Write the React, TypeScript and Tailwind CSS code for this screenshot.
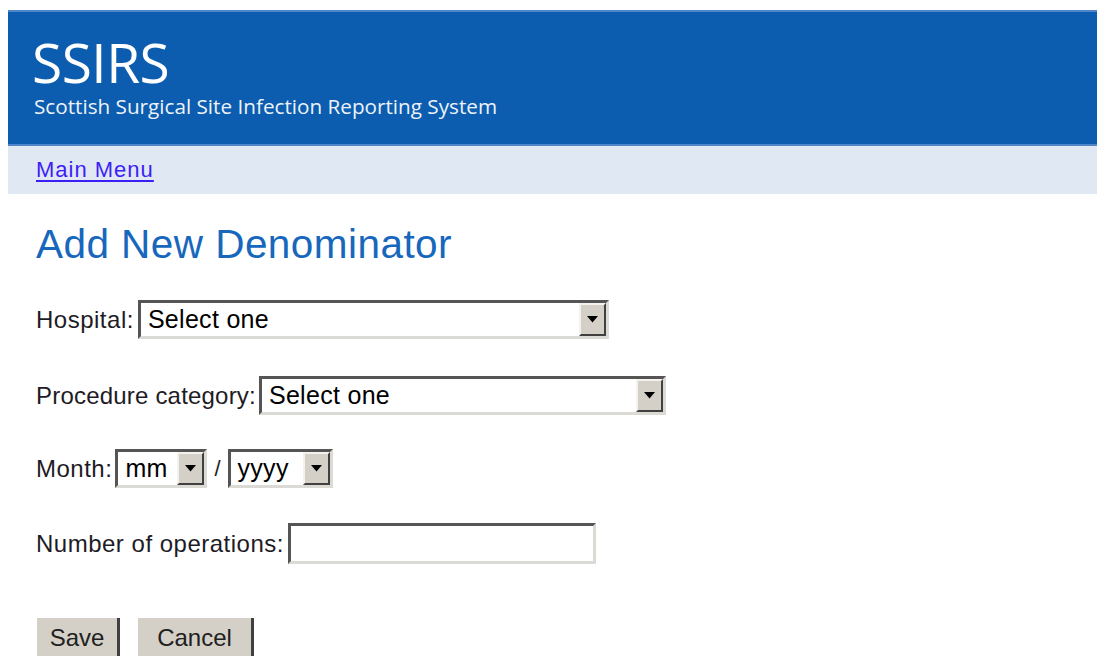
import React from "react";

const arial = { fontFamily: '"Liberation Sans", Arial, sans-serif' };
const humanist = { fontFamily: '"Open Sans", "Noto Sans", sans-serif' };

function DropArrow() {
  return (
    <div className="flex h-full w-[27px] shrink-0 items-center justify-center border-2 border-t-[#f4f2ee] border-l-[#f4f2ee] border-b-[#404040] border-r-[#404040] bg-[#d4d0c8]">
      <svg width="11" height="7" viewBox="0 0 11 7">
        <path d="M0 0 H11 L5.5 6.5 Z" fill="#000" />
      </svg>
    </div>
  );
}

function FakeSelect({ width, text }: { width: string; text: string }) {
  return (
    <div
      className={`flex h-[39px] items-stretch border-[3px] border-t-[#555] border-l-[#555] border-b-[#dcdad5] border-r-[#dcdad5] bg-white ${width}`}
    >
      <div className="flex flex-1 items-center overflow-hidden pl-[7px] text-[25px] leading-none tracking-[0.3px] text-black">
        {text}
      </div>
      <DropArrow />
    </div>
  );
}

function Label({ children, tight }: { children: React.ReactNode; tight?: boolean }) {
  return (
    <span className={`text-[24px] text-[#1e1b26] ${tight ? "tracking-[0.2px]" : "tracking-[0.5px]"}`}>
      {children}
    </span>
  );
}

export default function App() {
  return (
    <div className="min-h-[656px] bg-white pl-[8px] pt-[10px]" style={arial}>
      {/* site banner */}
      <header className="h-[136px] border-t-2 border-b-2 border-t-[#4f86c9] border-b-[#4f86c9] bg-[#0c5daf] pl-[24px] pt-[25px] text-white">
        <div className="text-[55px] leading-[50px] tracking-[-0.5px]" style={humanist}>
          SSIRS
        </div>
        <div className="mt-[7px] pl-[2px] text-[20.7px] leading-[24px] text-[#eef3fa]" style={humanist}>
          Scottish Surgical Site Infection Reporting System
        </div>
      </header>

      {/* navigation strip */}
      <nav className="flex h-[48px] items-center bg-[#dfe8f3] pl-[28px]">
        <a
          href="#"
          className="text-[22px] leading-none tracking-[1px] text-[#3d1ff5] underline decoration-[2px] underline-offset-[3px]"
        >
          Main Menu
        </a>
      </nav>

      <main className="pl-[28px]">
        <h1 className="mt-[28px] text-[40.5px] leading-[44px] tracking-[0.45px] text-[#1767bd]">Add New Denominator</h1>

        <div className="mt-[34px] flex items-center gap-[4px]">
          <Label>Hospital:</Label>
          <FakeSelect width="w-[471px]" text="Select one" />
        </div>

        <div className="mt-[37px] flex items-center gap-[3px]">
          <Label tight>Procedure category:</Label>
          <FakeSelect width="w-[407px]" text="Select one" />
        </div>

        <div className="mt-[34px] flex items-center gap-[3px]">
          <Label>Month:</Label>
          <FakeSelect width="w-[92px]" text="mm" />
          <span className="mx-[4px] text-[22px] text-[#1e1b26]">/</span>
          <FakeSelect width="w-[105px]" text="yyyy" />
        </div>

        <div className="mt-[35px] flex items-center gap-[4px]">
          <Label>Number of operations:</Label>
          <div className="h-[41px] w-[308px] border-[3px] border-t-[#555] border-l-[#555] border-b-[#dcdad5] border-r-[#dcdad5] bg-white" />
        </div>

        <div className="mt-[54px] flex gap-[18px] pl-[1px]">
          <button className="h-[44px] w-[83px] border-r-[3px] border-r-[#404040] bg-[#d4d0c8] pb-[4px] text-[24px] text-[#202020]">
            Save
          </button>
          <button className="h-[44px] w-[116px] border-r-[3px] border-r-[#404040] bg-[#d4d0c8] pb-[4px] text-[24px] text-[#202020]">
            Cancel
          </button>
        </div>
      </main>
    </div>
  );
}
